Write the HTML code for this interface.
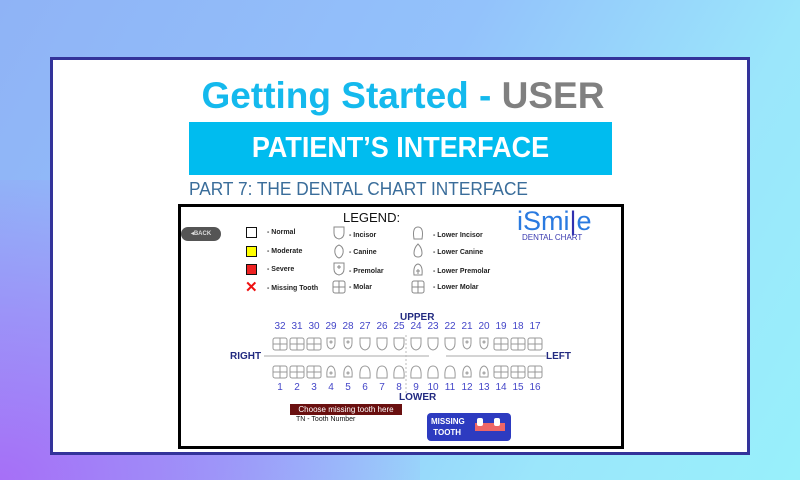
<!DOCTYPE html>
<html><head><style>
*{margin:0;padding:0;box-sizing:border-box}
body{width:800px;height:480px;overflow:hidden;position:relative;font-family:"Liberation Sans",sans-serif;
background:linear-gradient(120deg,#8fb3f6 0%,#93c2fb 45%,#9be6fb 75%,#98f0fb 100%);}
.bl{position:absolute;left:0;bottom:0;width:420px;height:300px;background:radial-gradient(ellipse at 0% 100%,#a66ff7 0%,rgba(166,111,247,0.5) 40%,rgba(166,111,247,0) 75%)}
.panel{position:absolute;left:50px;top:57px;width:700px;height:398px;background:#fff;border:3px solid #33339a}
.abs{position:absolute;white-space:nowrap}
.title{left:0;width:700px;text-align:center;top:15px;font-size:37px;font-weight:bold;color:#14b9ed}
.title span{color:#808080}
.bar{left:136px;top:62px;width:423px;height:53px;background:#00bcef;color:#fff;font-weight:bold;font-size:29px;text-align:center;line-height:53px}
.bar div{transform:scaleX(0.93)}
.part{left:136px;top:119px;font-size:18px;color:#3a6d9a;transform:scaleX(0.96);transform-origin:left}
.chart{position:absolute;left:178px;top:204px;width:446px;height:245px;border:3px solid #000;background:#fff}
.s{font-size:7px;font-weight:bold;color:#222}
.n{font-size:10px;color:#4446c8}
.lab{font-size:10px;font-weight:bold;color:#222a80}
</style></head><body>
<div class="bl"></div>
<div class="panel">
<div class="abs title">Getting Started - <span>USER</span></div>
<div class="abs bar"><div>PATIENT’S INTERFACE</div></div>
<div class="abs part">PART 7: THE DENTAL CHART INTERFACE</div>
</div>
<div class="chart">
<div class="abs" style="left:0;top:20px;width:40px;height:14px;background:#555;border-radius:7px;color:#ddd;font-size:6px;font-weight:bold;line-height:14px;text-align:center">◂BACK</div>
<div class="abs" style="left:162px;top:3px;font-size:13px;color:#111">LEGEND:</div>
<div class="abs" style="left:336px;top:0px;font-size:27px;color:#2a7ae0;line-height:28px">iSmi<span style="color:#3030b0">|</span>e</div>
<div class="abs" style="left:341px;top:26px;font-size:8px;color:#3a3ab0">DENTAL CHART</div>
<div class="abs" style="left:65px;top:20px;width:11px;height:11px;border:1.5px solid #111"></div>
<div class="abs" style="left:65px;top:39px;width:11px;height:11px;border:1.5px solid #111;background:#ff0"></div>
<div class="abs" style="left:65px;top:57px;width:11px;height:11px;border:1.5px solid #111;background:#e22"></div>
<div class="abs" style="left:64px;top:71px;font-size:15px;color:#e11;font-weight:bold">✕</div>
<div class="abs s" style="left:86px;top:22px">- Normal</div>
<div class="abs s" style="left:86px;top:41px">- Moderate</div>
<div class="abs s" style="left:86px;top:59px">- Severe</div>
<div class="abs s" style="left:86px;top:78px">- Missing Tooth</div>
<svg class="abs" style="left:150px;top:18px" width="100" height="75" fill="none" stroke="#888" stroke-width="1">
<path d="M3 2h10v6q0 5-5 6q-5-1-5-6z"/>
<path d="M8 20q5 2 4 8q-1 4-4 5q-3-1-4-5q-1-6 4-8z"/>
<path d="M3 38h10v6q0 5-5 6q-5-1-5-6z"/><path d="M8 40v4M6 42h4"/>
<rect x="2" y="56" width="12" height="12" rx="2"/><path d="M8 56v12M2 62h12"/>
</svg>
<div class="abs s" style="left:168px;top:25px">- Incisor</div>
<div class="abs s" style="left:168px;top:42px">- Canine</div>
<div class="abs s" style="left:168px;top:61px">- Premolar</div>
<div class="abs s" style="left:168px;top:77px">- Molar</div>
<svg class="abs" style="left:229px;top:18px" width="20" height="75" fill="none" stroke="#888" stroke-width="1">
<path d="M4 14q-2-12 4-12q6 0 4 12z"/>
<path d="M8 19q4 4 4 9q0 4-4 4q-4 0-4-4q0-5 4-9z"/>
<path d="M4 50q-1-10 4-11q5 1 4 11z"/><path d="M8 44v5M6 46h4"/>
<rect x="2" y="56" width="12" height="12" rx="2"/><path d="M8 56v12M2 62h12"/>
</svg>
<div class="abs s" style="left:252px;top:25px">- Lower Incisor</div>
<div class="abs s" style="left:252px;top:42px">- Lower Canine</div>
<div class="abs s" style="left:252px;top:61px">- Lower Premolar</div>
<div class="abs s" style="left:252px;top:77px">- Lower Molar</div>
<div class="abs lab" style="left:219px;top:105px">UPPER</div>
<div class="abs lab" style="left:218px;top:185px">LOWER</div>
<div class="abs lab" style="left:49px;top:144px">RIGHT</div>
<div class="abs lab" style="left:365px;top:144px">LEFT</div>
<svg class="abs" style="left:0;top:100px" width="440" height="110" fill="none" stroke="#999" stroke-width="1">
<path d="M83 49h165M265 49h100" stroke="#aaa"/>
<path d="M225 28v60" stroke="#bbb" stroke-dasharray="2 2"/>
<g id="u"></g>
</svg>
<div id="teeth"></div>
<div class="abs" style="left:109px;top:197px;width:112px;height:11px;background:#6a1010;color:#fff;font-size:8px;text-align:center;line-height:11px">Choose missing tooth here</div>
<div class="abs" style="left:115px;top:209px;font-size:7px;color:#111">TN - Tooth Number</div>
<div class="abs" style="left:246px;top:206px;width:84px;height:28px;background:#2d3bc0;border-radius:4px;color:#fff;font-size:8px;font-weight:bold;line-height:11px;padding:3px 0 0 4px">MISSING<br>&nbsp;TOOTH</div>
<div class="abs" style="left:294px;top:216px;width:30px;height:8px;background:#e66"></div>
<div class="abs" style="left:296px;top:211px;width:6px;height:8px;background:#fff;border-radius:2px"></div>
<div class="abs" style="left:313px;top:211px;width:6px;height:8px;background:#fff;border-radius:2px"></div>
</div>
<script>
var c=document.querySelector('.chart'),svg=c.querySelector('svg g'),h='',s='';
var up=[32,31,30,29,28,27,26,25,24,23,22,21,20,19,18,17];
for(var i=0;i<16;i++){
 var x=99+i*17;
 h+='<div class="abs n" style="left:'+(x-8)+'px;top:114px;width:16px;text-align:center">'+up[i]+'</div>';
 h+='<div class="abs n" style="left:'+(x-8)+'px;top:175px;width:16px;text-align:center">'+(i+1)+'</div>';
 var t=(i<3||i>12)?'m':(i==3||i==4||i==11||i==12)?'p':'i';
 var yu=31,yl=59;
 if(t=='m'){s+='<rect x="'+(x-7)+'" y="'+yu+'" width="14" height="12" rx="2"/><path d="M'+x+' '+yu+'v12M'+(x-7)+' '+(yu+6)+'h14"/>';
  s+='<rect x="'+(x-7)+'" y="'+yl+'" width="14" height="12" rx="2"/><path d="M'+x+' '+yl+'v12M'+(x-7)+' '+(yl+6)+'h14"/>';}
 else if(t=='p'){s+='<path d="M'+(x-4)+' '+yu+'h8v5q0 5-4 6q-4-1-4-6z"/><circle cx="'+x+'" cy="'+(yu+4)+'" r="1"/>';
  s+='<path d="M'+(x-4)+' '+(yl+11)+'q-1-10 4-11q5 1 4 11z"/><circle cx="'+x+'" cy="'+(yl+7)+'" r="1"/>';}
 else{s+='<path d="M'+(x-5)+' '+yu+'h10v5q0 6-5 7q-5-1-5-7z"/>';
  s+='<path d="M'+(x-5)+' '+(yl+12)+'q-1-12 5-12q6 0 5 12z"/>';}
}
document.getElementById('teeth').outerHTML=h;svg.innerHTML=s;
</script>
</body></html>
